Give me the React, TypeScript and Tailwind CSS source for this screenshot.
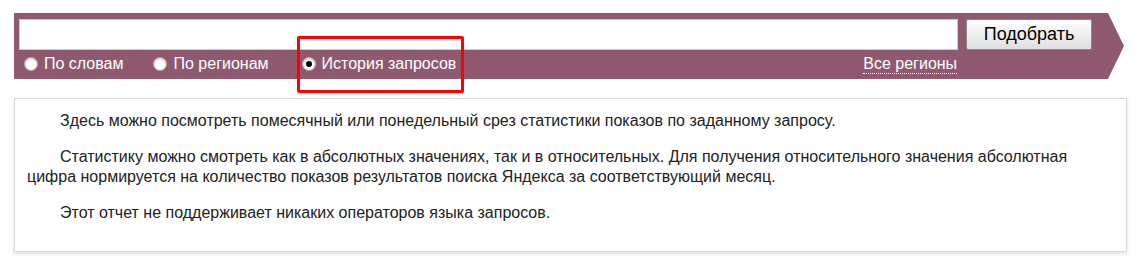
import React from "react";

const Radio = ({ checked, label }: { checked?: boolean; label: string }) => (
  <label className="flex items-center gap-[6px]">
    <span className="w-[14px] h-[14px] rounded-full bg-white border border-[#b8a9a0] flex items-center justify-center shadow-[inset_0_1px_2px_rgba(0,0,0,0.25)]">
      {checked && <span className="w-[6px] h-[6px] rounded-full bg-black" />}
    </span>
    <span>{label}</span>
  </label>
);

export default function App() {
  return (
    <div className="w-[1141px] h-[266px] bg-white relative font-['Liberation_Sans',Arial,sans-serif]">
      <div className="pt-[13px] pl-[14px] flex">
        {/* Band */}
        <div className="w-[1093px] h-[66px] bg-[#8f5a70] px-[5px] pt-[6px] text-white">
          <div className="flex gap-[8px]">
            <input className="w-[939px] h-[31px] bg-white border border-[#cfc7cb] outline-none" />
            <button className="w-[126px] h-[31px] rounded-[2px] border border-[#8a8a8a] bg-gradient-to-b from-white to-[#dedede] text-black text-[18px]">
              Подобрать
            </button>
          </div>
          <div className="flex items-center h-[26px] text-[16px] mt-[1px] pl-[5px]">
            <Radio label="По словам" />
            <div className="w-[30px]" />
            <Radio label="По регионам" />
            <div className="w-[33px]" />
            <Radio checked label="История запросов" />
            <span className="ml-[407px] border-b border-dotted border-white leading-[18px]">
              Все регионы
            </span>
          </div>
        </div>
        <svg width="18" height="66" viewBox="0 0 18 66" className="block">
          <polygon points="0,0 1,0 17,33 1,66 0,66" fill="#8f5a70" />
        </svg>
      </div>

      {/* Annotation */}
      <div className="absolute left-[297px] top-[36px] w-[167px] h-[57px] border-[3px] border-[#f00] rounded-[2px]" />

      {/* Info box */}
      <div className="mt-[19px] ml-[14px] w-[1113px] h-[154px] border border-[#d9d9d9] shadow-[0_2px_4px_rgba(0,0,0,0.12)] px-[12px] pt-[12px] text-[16px] leading-[20px] text-[#222]">
        <p className="indent-[33px] mb-[16px]">
          Здесь можно посмотреть помесячный или понедельный срез статистики показов по заданному запросу.
        </p>
        <p className="indent-[33px] mb-[16px]">
          Статистику можно смотреть как в абсолютных значениях, так и в относительных. Для получения относительного значения абсолютная цифра нормируется на количество показов результатов поиска Яндекса за соответствующий месяц.
        </p>
        <p className="indent-[33px]">Этот отчет не поддерживает никаких операторов языка запросов.</p>
      </div>
    </div>
  );
}
